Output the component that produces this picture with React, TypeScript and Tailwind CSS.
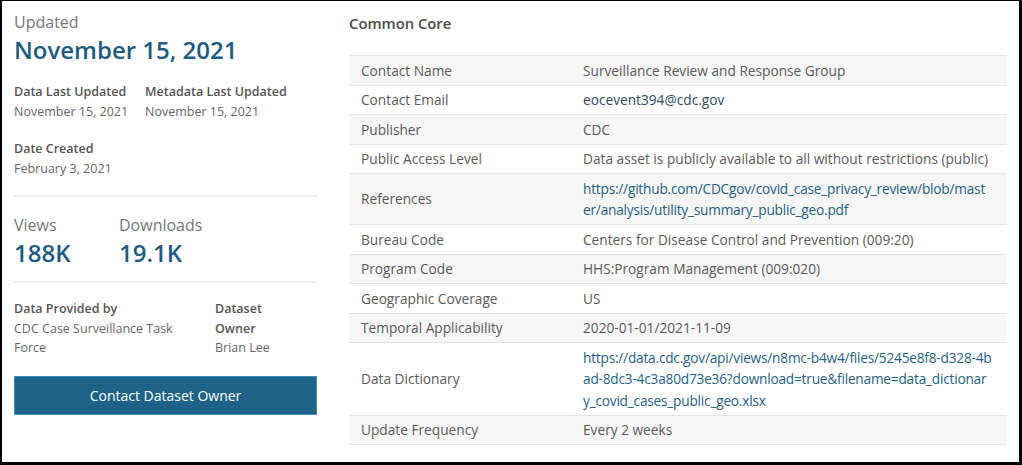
import React from 'react';

const rows: { label: string; value: string; link?: boolean; dark?: boolean }[] = [
  { label: 'Contact Name', value: 'Surveillance Review and Response Group' },
  { label: 'Contact Email', value: 'eocevent394@cdc.gov', dark: true },
  { label: 'Publisher', value: 'CDC' },
  { label: 'Public Access Level', value: 'Data asset is publicly available to all without restrictions (public)' },
  {
    label: 'References',
    value: 'https://github.com/CDCgov/covid_case_privacy_review/blob/master/analysis/utility_summary_public_geo.pdf',
    link: true,
  },
  { label: 'Bureau Code', value: 'Centers for Disease Control and Prevention (009:20)' },
  { label: 'Program Code', value: 'HHS:Program Management (009:020)' },
  { label: 'Geographic Coverage', value: 'US' },
  { label: 'Temporal Applicability', value: '2020-01-01/2021-11-09' },
  {
    label: 'Data Dictionary',
    value:
      'https://data.cdc.gov/api/views/n8mc-b4w4/files/5245e8f8-d328-4bad-8dc3-4c3a80d73e36?download=true&filename=data_dictionary_covid_cases_public_geo.xlsx',
    link: true,
  },
  { label: 'Update Frequency', value: 'Every 2 weeks' },
];

export default function App() {
  return (
    <div
      className="bg-black pt-[1px] pl-[2px] pr-[3px] pb-[3px] w-[1022px] h-[465px]"
      style={{ fontFamily: '"Open Sans", "Liberation Sans", sans-serif' }}
    >
      <div className="bg-white h-[461px] flex pl-[12px] pr-[12px]">
        {/* --- LEFT: dates, stats, owner --- */}
        <div className="w-[303px] shrink-0 pt-[10px]">
          <div className="text-[16px] leading-[22px] text-[#777]">Updated</div>
          <div className="mt-[1px] text-[24px] leading-[32px] font-semibold text-[#1d5c80]">November 15, 2021</div>

          <div className="mt-[16px] flex text-[12.5px] leading-[20px]">
            <div className="w-[131px]">
              <div className="font-semibold text-[#555]">Data Last Updated</div>
              <div className="text-[#666]">November 15, 2021</div>
            </div>
            <div>
              <div className="font-semibold text-[#555]">Metadata Last Updated</div>
              <div className="text-[#666]">November 15, 2021</div>
            </div>
          </div>

          <div className="mt-[17px] text-[12.5px] leading-[20px]">
            <div className="font-semibold text-[#555]">Date Created</div>
            <div className="text-[#666]">February 3, 2021</div>
          </div>

          <div className="mt-[16px] border-t-2 border-[#eeeeee]" />

          <div className="mt-[17px] flex">
            <div className="w-[105px]">
              <div className="text-[16px] leading-[22px] text-[#777]">Views</div>
              <div className="mt-[1px] text-[24px] leading-[32px] font-semibold text-[#1d5c80]">188K</div>
            </div>
            <div>
              <div className="text-[16px] leading-[22px] text-[#777]">Downloads</div>
              <div className="mt-[1px] text-[24px] leading-[32px] font-semibold text-[#1d5c80]">19.1K</div>
            </div>
          </div>

          <div className="mt-[12px] border-t-2 border-[#eeeeee]" />

          <div className="mt-[16px] flex text-[12.5px] leading-[19.5px]">
            <div className="w-[201px] pr-[15px]">
              <div className="font-semibold text-[#555]">Data Provided by</div>
              <div className="text-[#666]">CDC Case Surveillance Task Force</div>
            </div>
            <div className="w-[70px]">
              <div className="font-semibold text-[#555]">Dataset Owner</div>
              <div className="text-[#666]">Brian Lee</div>
            </div>
          </div>

          <button className="mt-[18px] w-full h-[39px] bg-[#1e6387] border border-[#3b8cbb] text-white text-[14px]">
            Contact Dataset Owner
          </button>
        </div>

        {/* --- RIGHT: Common Core table --- */}
        <div className="ml-[32px] flex-1 pt-[12px]">
          <div className="text-[14.8px] leading-[20px] font-semibold text-[#4a4a4a]">Common Core</div>
          <div className="mt-[22px] border-b border-[#e3e3e3] text-[13.7px] leading-[21.5px] text-[#5a5a5a]">
            {rows.map((r, i) => (
              <div
                key={r.label}
                className={`flex border-t border-[#e3e3e3] ${i % 2 === 0 ? 'bg-[#f6f6f6]' : 'bg-white'}`}
              >
                <div className="w-[222px] shrink-0 px-3 py-[3.5px] flex items-center">{r.label}</div>
                <div
                  className={`flex-1 min-w-0 pl-3 pr-[15px] py-[3.5px] break-all ${
                    r.link ? 'text-[#1f5f86] tracking-[-0.22px]' : r.dark ? 'text-[#2c4a66]' : ''
                  }`}
                >
                  {r.value}
                </div>
              </div>
            ))}
          </div>
        </div>
      </div>
    </div>
  );
}
